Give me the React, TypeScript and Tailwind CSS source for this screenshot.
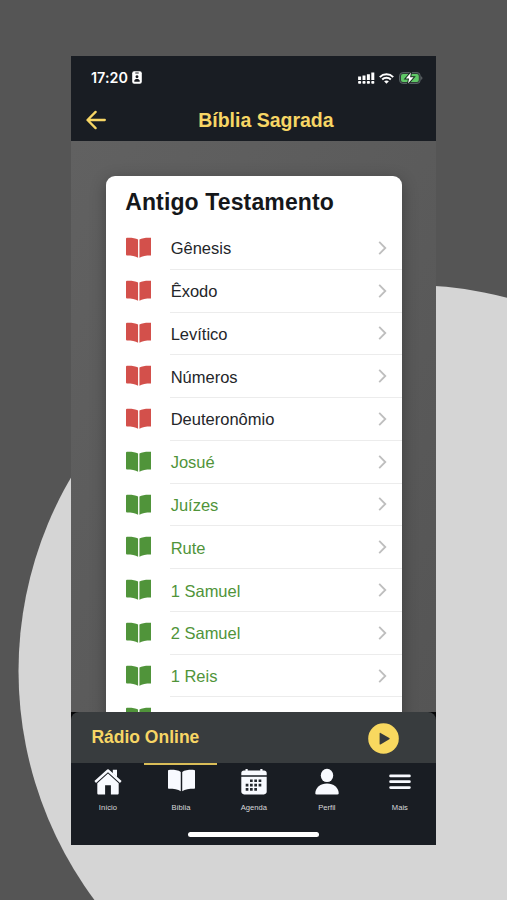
import React from "react";

const books = [
  { name: "Gênesis", group: "law" },
  { name: "Êxodo", group: "law" },
  { name: "Levítico", group: "law" },
  { name: "Números", group: "law" },
  { name: "Deuteronômio", group: "law" },
  { name: "Josué", group: "history" },
  { name: "Juízes", group: "history" },
  { name: "Rute", group: "history" },
  { name: "1 Samuel", group: "history" },
  { name: "2 Samuel", group: "history" },
  { name: "1 Reis", group: "history" },
];

function BookIcon({ className }: { className: string }) {
  return (
    <svg viewBox="0 0 26 21" className={className} fill="currentColor">
      <path d="M12.300 2.200C9.700.6 5.500.1 1 .3.4.3 0 .7 0 1.200v16.300c0 .6.4 1 1 1 4.500 0 8.700.5 11.300 2.300z" />
      <path d="M13.700 2.200C16.300.6 20.500.1 25 .3c.6 0 1 .4 1 .9v16.300c0 .6-.4 1-1 1-4.500 0-8.700.5-11.300 2.300z" />
    </svg>
  );
}

function Background() {
  return (
    <svg viewBox="0 0 507 900" className="absolute inset-0 h-full w-full">
      <ellipse cx="408" cy="671" rx="389.500" ry="386" fill="#d5d5d5" />
    </svg>
  );
}

function StatusBar() {
  return (
    <div className="flex h-[43px] items-center justify-between pl-[19.500px] pr-[13px] pt-[1px] text-white">
      <div className="flex items-center gap-[4px]">
        <span className="font-['Inter'] text-[14.300px] font-semibold leading-none tracking-[0.1px]">17:20</span>
        <svg viewBox="0 0 10 13" className="h-[13px] w-[10px]">
          <rect x=".2" y=".2" width="9.600" height="12.600" rx="2" fill="#fff" />
          <path d="M3.300 2h3.400" stroke="#1a1c22" strokeWidth="1" />
          <circle cx="5" cy="5.800" r="1.450" fill="#1a1c22" />
          <path d="M2.300 10.700V9.800C2.500 8.500 3.400 8 5 8s2.500.5 2.700 1.800v.9z" fill="#1a1c22" />
        </svg>
      </div>
      <div className="flex items-center">
        <svg viewBox="0 0 17 12" className="h-[12px] w-[17px]" fill="#fff">
          <path d="M.1 4.600h3v3.500h-3zM4.500 3.600h3v4.500h-3zM8.900 2.300h3v5.800h-3zM13.300.6h3v7.500h-3z" />
          <rect x=".1" y="9" width="3" height="2.800" rx=".8" />
          <rect x="4.500" y="9" width="3" height="2.800" rx=".8" />
          <rect x="8.900" y="9" width="3" height="2.800" rx=".8" />
          <rect x="13.300" y="9" width="3" height="2.800" rx=".8" />
        </svg>
        <svg viewBox="0 0 15 11" className="ml-[4px] h-[11px] w-[15px]" fill="none" stroke="#fff" strokeWidth="2">
          <path d="M.8 4.100C4.500.4 10.500.4 14.200 4.100M3.200 6.500c2.400-2.300 6.200-2.300 8.600 0" />
          <path d="M5.100 8.300c1.300-1.200 3.500-1.200 4.800 0L7.500 10.800z" fill="#fff" stroke="none" />
        </svg>
        <svg viewBox="0 0 24 12" className="ml-[5px] h-[12px] w-[24px]">
          <rect x=".6" y=".6" width="20.600" height="10.800" rx="3.200" fill="#2c3a34" stroke="#5c6468" />
          <rect x="2" y="2" width="17.800" height="8" rx="2" fill="#5fc766" />
          <path d="M22.300 4.200c1.400.5 1.400 3.100 0 3.600z" fill="#707478" />
          <path d="M12 .5 6.800 6.500h3.300L9 11.600l5.600-6.300h-3.500z" fill="#fff" stroke="#1a2c22" strokeWidth="2" paintOrder="stroke" />
        </svg>
      </div>
    </div>
  );
}

function Header() {
  return (
    <header className="h-[85px] shrink-0 bg-[#191d23]">
      <StatusBar />
      <div className="grid h-[42px] grid-cols-[48px_1fr_22px] items-center text-[#f7d665]">
        <svg viewBox="0 0 20 20" className="ml-[14.600px] h-[20px] w-[20px]" fill="none" stroke="currentColor" strokeWidth="2.300" strokeLinecap="round" strokeLinejoin="round">
          <path d="M18.800 10H1.700M9.600 1.900 1.500 10l8.100 8.100" />
        </svg>
        <h1 className="-ml-[2px] pt-[2px] text-center text-[19.500px] font-bold leading-none">Bíblia Sagrada</h1>
      </div>
    </header>
  );
}

function BookRow({ name, group }: { name: string; group: string }) {
  const law = group === "law";
  return (
    <li className="flex h-[42.780px] shrink-0 items-center pl-[20px]">
      <BookIcon className={law ? "mb-[1.400px] h-[21.500px] w-[25.500px] text-[#d3504b]" : "mb-[1.400px] h-[21.500px] w-[25.500px] text-[#50943a]"} />
      <div className="ml-[18.500px] flex h-full flex-1 items-center justify-between border-b border-[#ececec] pl-[1px] pr-[15px]">
        <span className={law ? "pt-[1.600px] text-[16.500px] leading-none text-[#24262a]" : "pt-[1.600px] text-[16.500px] leading-none text-[#50943a]"}>{name}</span>
        <svg viewBox="0 0 9 14" className="h-[14px] w-[9px]" fill="none" stroke="#bebebe" strokeWidth="1.800">
          <path d="m1.200.9 6.100 6.100-6.100 6.100" />
        </svg>
      </div>
    </li>
  );
}

function RadioBar() {
  return (
    <div className="h-[51.300px] shrink-0 bg-[#050607]">
      <div className="flex h-full items-center justify-between rounded-t-[8px] bg-[#383c3e] pl-[20px] pr-[37.500px]">
        <span className="pt-[1px] text-[17.500px] font-bold leading-none text-[#f7d665]">Rádio Online</span>
        <svg viewBox="0 0 31 31" className="mt-[1px] h-[31px] w-[31px]">
          <circle cx="15.500" cy="15.500" r="15.300" fill="#f8d85f" />
          <path d="M11.600 10.300v10.600c0 .5.5.7.9.5l8.800-5.200c.5-.3.5-.8 0-1.100l-8.800-5.200c-.4-.3-.9-.1-.9.400z" fill="#363a3c" />
        </svg>
      </div>
    </div>
  );
}

function HomeIcon() {
  return (
    <svg viewBox="0 0 28 28" className="h-[28px] w-[28px]" fill="#f8faff">
      <path d="M18.800 1.800h4.200v7.500l-4.200-3.800z" />
      <path d="M1.200 14 14 2.500 26.800 14" fill="none" stroke="#f8faff" strokeWidth="2.400" strokeLinejoin="round" />
      <path d="M3.300 15.200 14 5.600l10.700 9.600v10c0 .9-.5 1.400-1.400 1.400h-6.400v-9.300h-5.800v9.300H4.700c-.9 0-1.400-.5-1.400-1.400z" />
    </svg>
  );
}

function AgendaIcon() {
  return (
    <svg viewBox="0 0 28 28" className="h-[28px] w-[28px]">
      <path d="M1.300 7.200V5C1.300 3.400 2.400 2.400 4 2.400h1.500V.9h2.200v1.500h12.600V.9h2.200v1.500H24c1.600 0 2.700 1 2.700 2.600v2.200z" fill="#f8faff" />
      <path d="M1.300 8.700h25.400v14.900c0 1.700-1.100 2.800-2.800 2.800H4.100c-1.700 0-2.800-1.100-2.800-2.800z" fill="#f8faff" />
      <path d="M10 12.800h12.400M5.700 17.100h16.700M5.700 21.400H18.200" fill="none" stroke="#24282e" strokeWidth="2.600" strokeDasharray="2.700 1.600" />
    </svg>
  );
}

function ProfileIcon() {
  return (
    <svg viewBox="0 0 28 28" className="h-[28px] w-[28px]" fill="#f8faff">
      <ellipse cx="14" cy="7.400" rx="6.200" ry="6.700" />
      <path d="M2.300 25.200C2.300 19.600 7.500 15.400 14 15.400s11.700 4.200 11.700 9.800c0 .8-.4 1.200-1.200 1.200h-21c-.8 0-1.200-.4-1.200-1.200z" />
    </svg>
  );
}

function MenuIcon() {
  return (
    <svg viewBox="0 0 28 28" className="h-[28px] w-[28px]" fill="none" stroke="#f8faff" strokeWidth="2.800" strokeLinecap="round">
      <path d="M4.600 7.900h18.800M4.600 13.700h18.800M4.600 19.600h18.800" />
    </svg>
  );
}

function NavItem({ label, active = false, children }: { label: string; active?: boolean; children: React.ReactNode }) {
  return (
    <div className={active ? "flex flex-1 flex-col items-center border-t-2 border-[#d9bd58]" : "flex flex-1 flex-col items-center border-t-2 border-transparent"}>
      <div className="mt-[2.400px] flex h-[28px] items-center">{children}</div>
      <span className="mt-[7.600px] text-[7.600px] leading-[9px] text-[#d8d9dc]">{label}</span>
    </div>
  );
}

function Navigation() {
  return (
    <footer className="h-[81.700px] shrink-0 bg-[#191d23]">
      <nav className="flex h-[69.700px]">
        <NavItem label="Início"><HomeIcon /></NavItem>
        <NavItem label="Bíblia" active>
          <BookIcon className="-mt-[2px] ml-[1px] h-[23px] w-[27px] text-[#f8faff]" />
        </NavItem>
        <NavItem label="Agenda"><AgendaIcon /></NavItem>
        <NavItem label="Perfil"><ProfileIcon /></NavItem>
        <NavItem label="Mais"><MenuIcon /></NavItem>
      </nav>
      <div className="mx-auto -mt-[1px] h-[5px] w-[131px] rounded-full bg-white" />
    </footer>
  );
}

export default function App() {
  return (
    <main className="relative h-[900px] w-[507px] overflow-hidden bg-[#555555] pl-[71.400px] pt-[56px] font-['Liberation_Sans',Arial,sans-serif]">
      <Background />
      <div className="relative flex h-[789px] w-[365px] flex-col">
        <Header />
        <section className="h-[571px] shrink-0 overflow-hidden bg-linear-to-br from-[#616161] via-[#5b5b5b] to-[#555555] pl-[34.300px] pt-[34.500px]">
          <div className="h-[560px] w-[296.500px] overflow-hidden rounded-t-[9px] bg-white shadow-[0_4px_16px_rgba(0,0,0,0.3)]">
            <h2 className="h-[51.500px] pl-[19.500px] pt-[15px] text-[23px] font-bold leading-[23px] tracking-[0.130px] text-[#15171a]">Antigo Testamento</h2>
            <ul className="flex flex-col">
              {books.map((book) => (
                <BookRow key={book.name} name={book.name} group={book.group} />
              ))}
              <li className="pl-[20px] pt-[9.800px]">
                <BookIcon className="h-[21.500px] w-[25.500px] text-[#50943a]" />
              </li>
            </ul>
          </div>
        </section>
        <RadioBar />
        <Navigation />
      </div>
    </main>
  );
}
